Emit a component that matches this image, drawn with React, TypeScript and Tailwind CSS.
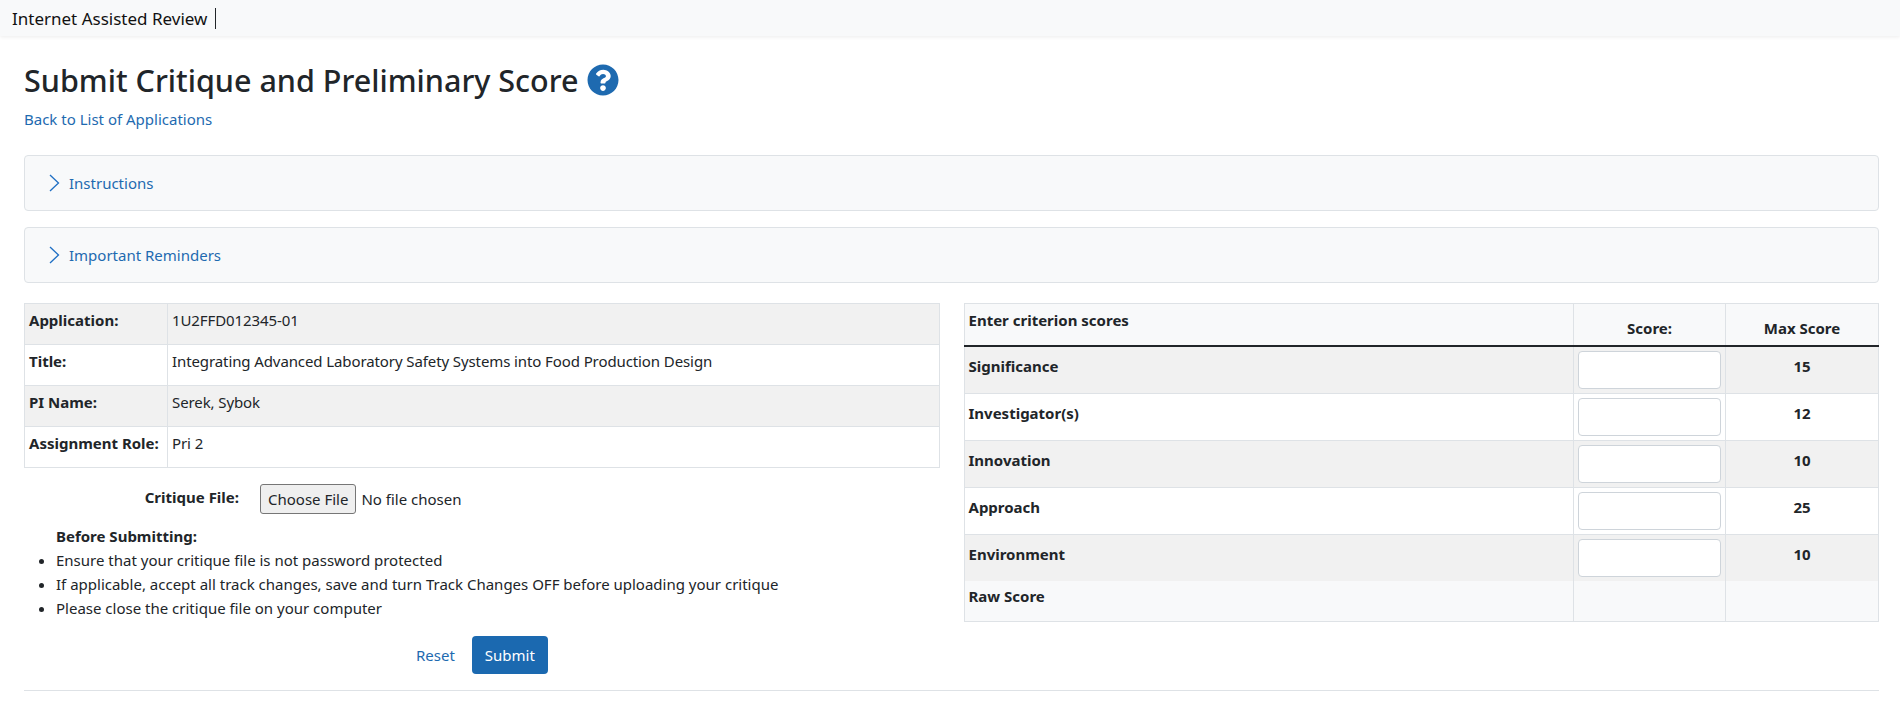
import React from 'react';
import { FaQuestionCircle } from 'react-icons/fa';

const appInfo = [
  { label: 'Application:', value: '1U2FFD012345-01' },
  { label: 'Title:', value: 'Integrating Advanced Laboratory Safety Systems into Food Production Design' },
  { label: 'PI Name:', value: 'Serek, Sybok' },
  { label: 'Assignment Role:', value: 'Pri 2' },
];

const criteria = [
  { name: 'Significance', max: 15 },
  { name: 'Investigator(s)', max: 12 },
  { name: 'Innovation', max: 10 },
  { name: 'Approach', max: 25 },
  { name: 'Environment', max: 10 },
];

function Accordion({ label }: { label: string }) {
  return (
    <div className="flex h-14 items-center rounded-[4px] border border-[#dee2e6] bg-[#f8f9fa] pl-6">
      <svg width="11" height="18" viewBox="0 0 11 18" fill="none" className="mr-[9px] shrink-0">
        <path d="M1 1l8.5 8L1 17" stroke="#1f6fc4" strokeWidth="1.3" />
      </svg>
      <a href="#" className="text-[#1e6ab0]">{label}</a>
    </div>
  );
}

export default function App() {
  return (
    <div className="min-h-[708px] bg-white text-[15px] leading-[21px] text-[#212529] font-['Noto_Sans','Open_Sans',sans-serif]">
      <nav className="flex h-9 items-center bg-[#f8f9fa] pl-3 shadow-[0_1px_4px_rgba(0,0,0,0.08)]">
        <span className="border-r border-[#212529] pr-[8px] text-[17px] leading-[21px] text-[#111]">Internet Assisted Review</span>
      </nav>

      <main className="pl-6 pr-[21px]">
        <div className="flex items-center pt-[25px]">
          <h1 className="text-[30.5px] leading-[38px] font-medium">Submit Critique and Preliminary Score</h1>
          <FaQuestionCircle className="ml-[8px] text-[#1e6ab0]" size={32} />
        </div>
        <div className="mt-[10px]">
          <a href="#" className="text-[#1e6ab0]">Back to List of Applications</a>
        </div>

        <div className="mt-[25px] flex flex-col gap-4">
          <Accordion label="Instructions" />
          <Accordion label="Important Reminders" />
        </div>

        <div className="mt-5 grid grid-cols-2 gap-6">
          <section>
            <table className="w-full border-collapse">
              <tbody>
                {appInfo.map((row, i) => (
                  <tr key={row.label} className={i % 2 === 0 ? 'h-[41px] bg-[#f1f1f1]' : 'h-[41px] bg-white'}>
                    <th className="w-[143px] border border-[#dee2e6] px-[4px] pt-[6px] align-top text-left font-bold whitespace-nowrap">{row.label}</th>
                    <td className="border border-[#dee2e6] px-[4px] pt-[6px] align-top tracking-[-0.1px]">{row.value}</td>
                  </tr>
                ))}
              </tbody>
            </table>

            <div className="mt-[16px] flex items-start">
              <label className="w-[215px] pt-[3px] text-right font-bold">Critique File:</label>
              <input
                type="file"
                className="ml-[21px] text-[15px] file:mr-[5px] file:h-[30px] file:rounded-[3px] file:border file:border-[#767676] file:bg-[#efefef] file:px-[7px] file:text-[#212529]"
              />
            </div>

            <div className="mt-[12px] pl-8 font-bold">Before Submitting:</div>
            <ul className="mt-[1px] list-disc pl-8 leading-[24px]">
              <li>Ensure that your critique file is not password protected</li>
              <li>If applicable, accept all track changes, save and turn Track Changes OFF before uploading your critique</li>
              <li>Please close the critique file on your computer</li>
            </ul>

            <div className="mt-[16px] flex items-center pl-[392px]">
              <a href="#" className="text-[#1e6ab0]">Reset</a>
              <button className="ml-[17px] h-[38px] w-[76px] rounded-[4px] bg-[#1b69b0] text-white">Submit</button>
            </div>
          </section>

          <section>
            <table className="w-full table-fixed border-collapse">
              <thead>
                <tr className="h-[42px] border-b-2 border-b-[#212529] bg-[#f8f9fa]">
                  <th className="border-x border-t border-[#dee2e6] border-b-[#212529] px-[4px] pt-[6px] align-top text-left font-bold">Enter criterion scores</th>
                  <th className="w-[152px] border-x border-t border-[#dee2e6] border-b-[#212529] px-[4px] pt-[14px] align-top text-center font-bold">Score:</th>
                  <th className="w-[153px] border-x border-t border-[#dee2e6] border-b-[#212529] px-[4px] pt-[14px] align-top text-center font-bold">Max Score</th>
                </tr>
              </thead>
              <tbody>
                {criteria.map((c, i) => {
                  const edge = i === criteria.length - 1 ? 'border-x border-t border-[#dee2e6]' : 'border border-[#dee2e6]';
                  return (
                    <tr key={c.name} className={i % 2 === 0 ? 'h-[47px] bg-[#f1f1f1]' : 'h-[47px] bg-white'}>
                      <td className={`${edge} px-[4px] align-top font-bold leading-[38px]`}>{c.name}</td>
                      <td className={`${edge} px-[4px] py-[4px]`}>
                        <input type="text" aria-label={c.name} className="block h-[38px] w-full rounded-[4px] border border-[#ced4da] bg-white" />
                      </td>
                      <td className={`${edge} px-[4px] align-top text-center font-bold leading-[38px]`}>{c.max}</td>
                    </tr>
                  );
                })}
                <tr className="h-[40px] bg-[#f8f9fa]">
                  <td className="border-x border-b border-[#dee2e6] px-[4px] pt-[5px] align-top font-bold">Raw Score</td>
                  <td className="border-x border-b border-[#dee2e6]"></td>
                  <td className="border-x border-b border-[#dee2e6]"></td>
                </tr>
              </tbody>
            </table>
          </section>
        </div>

        <hr className="mt-[16px] border-t border-[#dee2e6]" />
      </main>
    </div>
  );
}
